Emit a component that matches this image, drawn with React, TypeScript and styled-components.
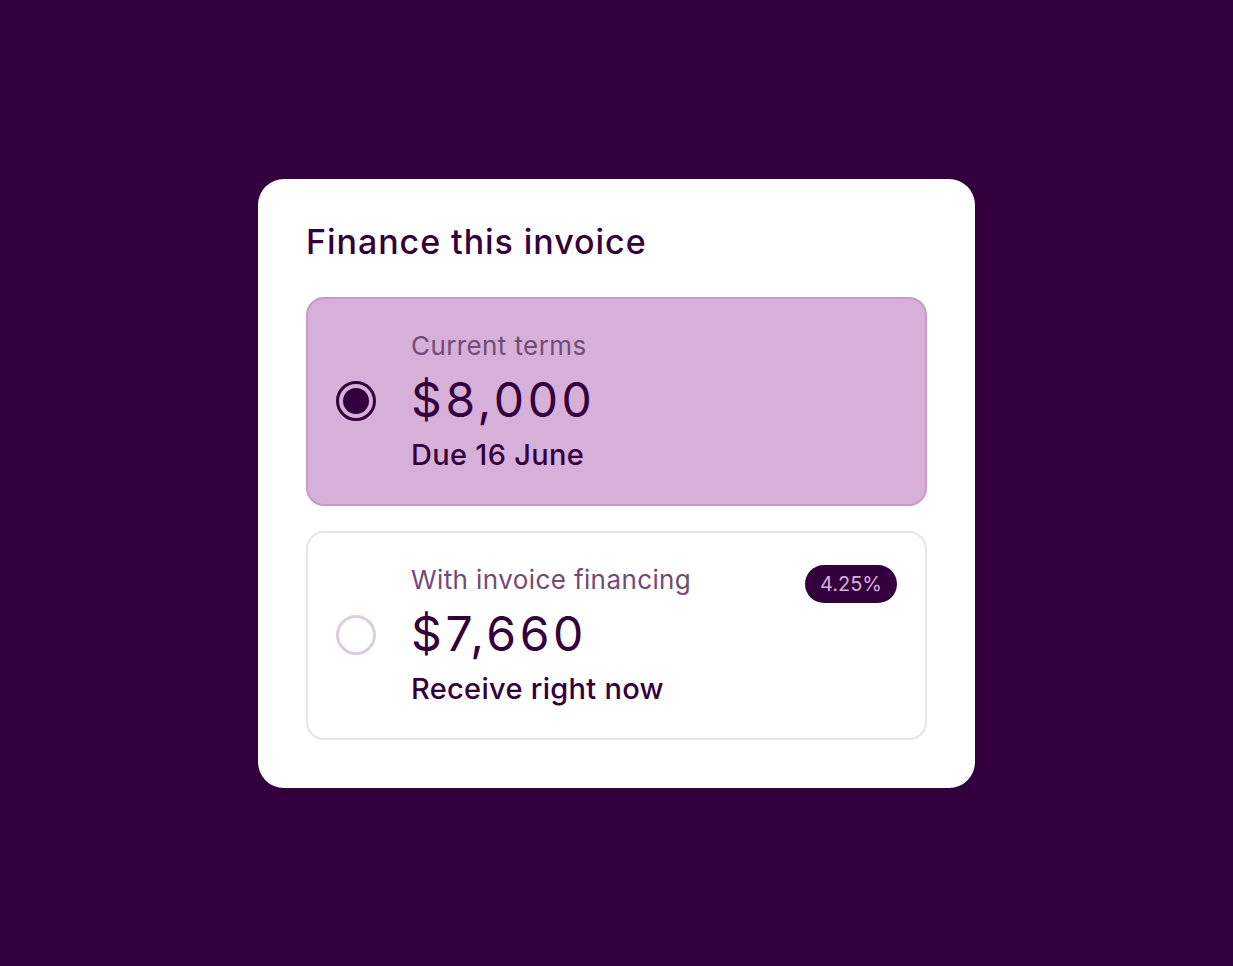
import React, { useState } from "react";
import styled, { createGlobalStyle } from "styled-components";

const GlobalStyle = createGlobalStyle`
  html, body {
    margin: 0;
    padding: 0;
    background: #33003d;
  }
  body {
    font-family: Inter, "Noto Sans", sans-serif;
  }
`;

interface Choice {
  id: string;
  label: string;
  amount: string;
  note: string;
  badge?: string;
}

const choices: Choice[] = [
  { id: "current", label: "Current terms", amount: "$8,000", note: "Due 16 June" },
  {
    id: "financing",
    label: "With invoice financing",
    amount: "$7,660",
    note: "Receive right now",
    badge: "4.25%",
  },
];

const App = () => {
  const [selected, setSelected] = useState("current");

  return (
    <Page>
      <GlobalStyle />
      <Card>
        <Title>Finance this invoice</Title>
        <Options>
          {choices.map((choice) => {
            const isActive = selected === choice.id;
            return (
              <Option key={choice.id} isActive={isActive} onClick={() => setSelected(choice.id)}>
                <Radio isActive={isActive} />
                <Details>
                  <Label>{choice.label}</Label>
                  <Amount>{choice.amount}</Amount>
                  <Note>{choice.note}</Note>
                </Details>
                {choice.badge && <Badge>{choice.badge}</Badge>}
              </Option>
            );
          })}
        </Options>
      </Card>
    </Page>
  );
};

const Page = styled.div`
  width: 1233px;
  height: 966px;
  display: flex;
  justify-content: center;
  align-items: center;
  background: #33003d;
`;

const Card = styled.div`
  width: 717px;
  box-sizing: border-box;
  padding: 42px 48px 48px;
  background: #ffffff;
  border-radius: 26px;
  display: flex;
  flex-direction: column;
  gap: 34px;
`;

const Title = styled.h1`
  margin: 0;
  font-size: 34px;
  line-height: 42px;
  font-weight: 450;
  color: #33003d;
  letter-spacing: 0.95px;
`;

const Options = styled.div`
  display: flex;
  flex-direction: column;
  gap: 25px;
`;

const Option = styled.div<{ isActive: boolean }>`
  position: relative;
  height: 209px;
  box-sizing: border-box;
  display: flex;
  align-items: center;
  gap: 35px;
  padding: 0 28px;
  border-radius: 18px;
  border: 2px solid ${(props) => (props.isActive ? "#c69bc9" : "#e8e2ea")};
  background: ${(props) => (props.isActive ? "#d7b0d9" : "#ffffff")};
  cursor: pointer;
`;

const Radio = styled.div<{ isActive: boolean }>`
  width: 40px;
  height: 40px;
  flex-shrink: 0;
  box-sizing: border-box;
  border-radius: 50%;
  border: 3px solid ${(props) => (props.isActive ? "#33003d" : "#dacfdd")};
  display: flex;
  justify-content: center;
  align-items: center;

  &::after {
    content: "";
    display: ${(props) => (props.isActive ? "block" : "none")};
    width: 26px;
    height: 26px;
    border-radius: 50%;
    background: #33003d;
  }
`;

const Details = styled.div`
  display: flex;
  flex-direction: column;
`;

const Label = styled.div`
  font-size: 26px;
  line-height: 34px;
  color: #714a79;
  letter-spacing: 0.4px;
`;

const Amount = styled.div`
  font-size: 48px;
  line-height: 56px;
  font-weight: 400;
  color: #33003d;
  letter-spacing: 3.6px;
  margin: 9px 0 9px;
`;

const Note = styled.div`
  font-size: 29px;
  line-height: 36px;
  font-weight: 500;
  color: #33003d;
  letter-spacing: 0.3px;
`;

const Badge = styled.div`
  position: absolute;
  top: 32px;
  right: 28px;
  height: 38px;
  padding: 0 15px;
  border-radius: 19px;
  background: #33003d;
  color: #d7b0d9;
  font-size: 20px;
  display: flex;
  align-items: center;
`;

export default App;
